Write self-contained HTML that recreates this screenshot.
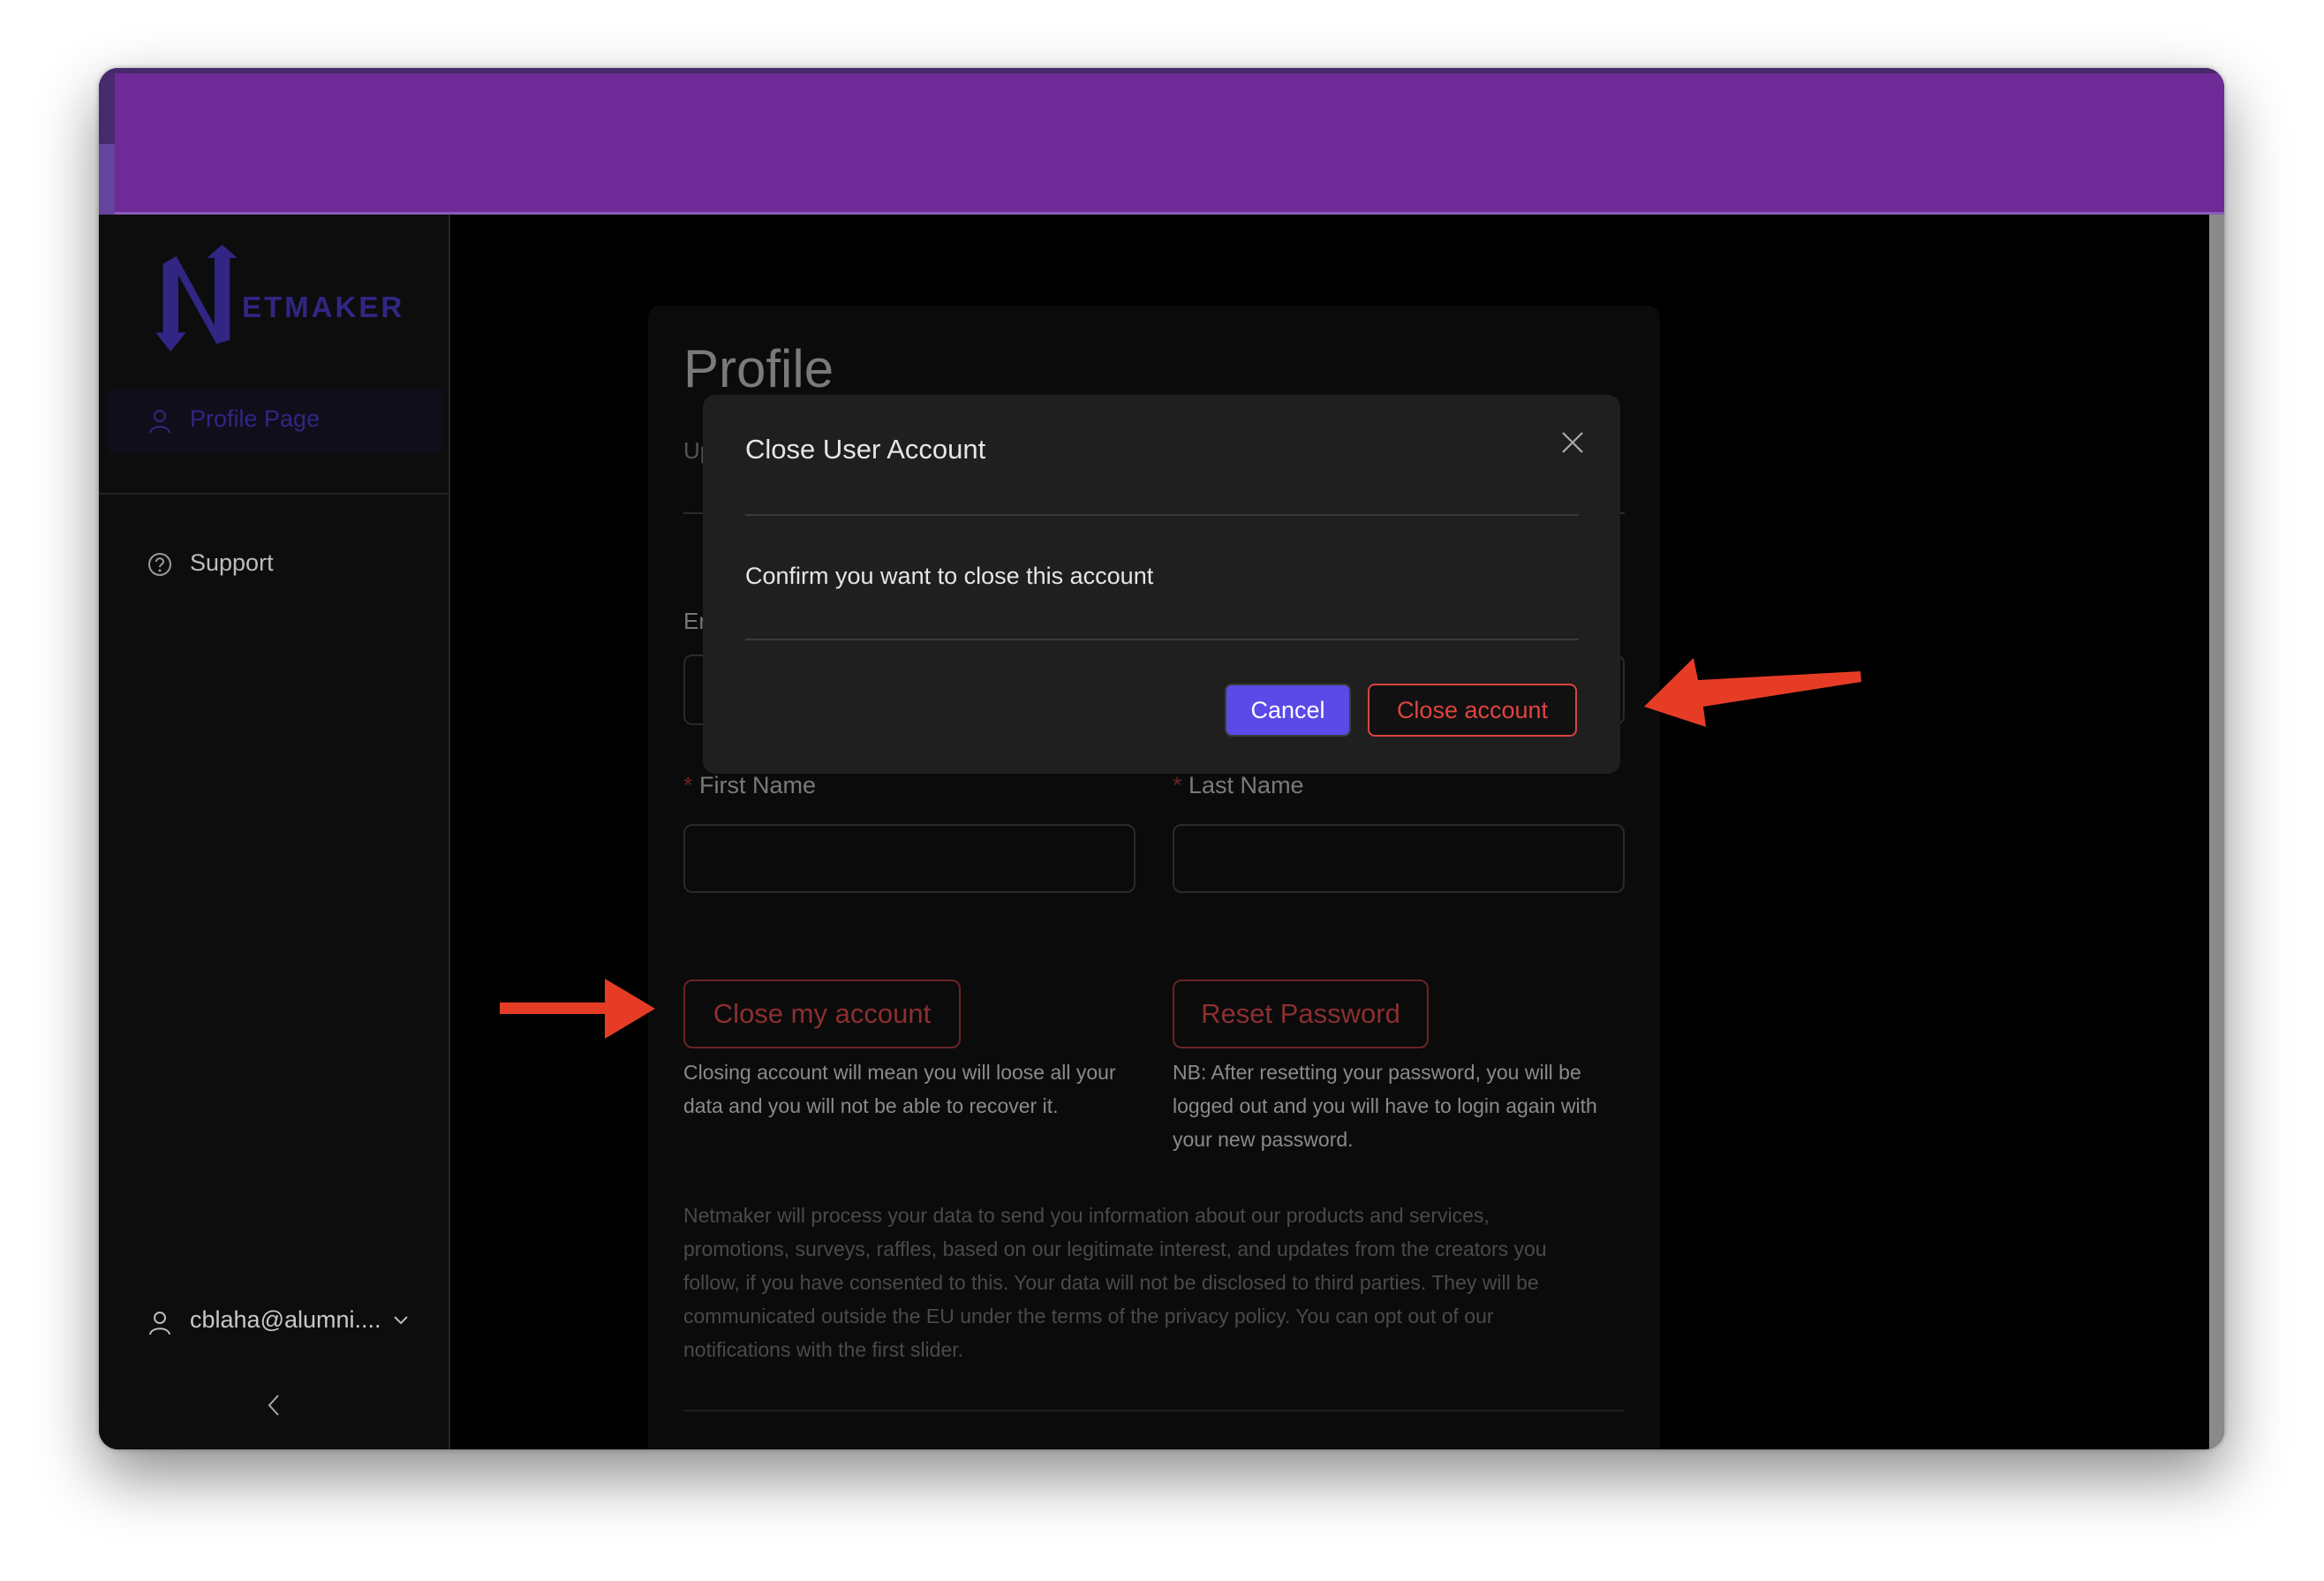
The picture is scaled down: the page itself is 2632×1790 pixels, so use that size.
<!DOCTYPE html>
<html><head><meta charset="utf-8"><style>
*{margin:0;padding:0;box-sizing:border-box}
body{width:2632px;height:1790px;background:#fff;position:relative;overflow:hidden;font-family:"Liberation Sans",sans-serif}
.win{position:absolute;left:112px;top:77px;width:2407px;height:1564px;border-radius:22px;overflow:hidden;background:#000;box-shadow:0 30px 70px rgba(0,0,0,.45),0 0 6px rgba(0,0,0,.3)}
.hdr{position:absolute;left:0;top:0;width:100%;height:166px;background:#6e2a96;border-top:6px solid #472a6b;border-bottom:3px solid #8a5bb8}
.hdr .l{position:absolute;left:0;top:0;width:18px;height:160px;background:#472a6b}
.hdr .l2{position:absolute;left:0;top:80px;width:18px;height:80px;background:#64449c}
.side{position:absolute;left:0;top:166px;width:398px;height:1398px;background:#0d0d0d;border-right:2px solid #262626}
.gray{position:absolute;right:0;top:166px;width:17px;height:1398px;background:#8a8a8a}
.card{position:absolute;left:622px;top:269px;width:1146px;height:1400px;background:#0b0b0b;border-radius:14px}
.abs{position:absolute;white-space:nowrap}
.inp{position:absolute;border:2px solid #2a2a2a;border-radius:10px;background:#0b0b0b}
.btnr{position:absolute;border:2px solid #6b2424;border-radius:10px;color:#8c2f2f;font-size:31px;display:flex;align-items:center;justify-content:center}
.desc{position:absolute;color:#8a8a8a;font-size:23px;line-height:38px}
.modal{position:absolute;left:684px;top:370px;width:1039px;height:429px;background:#1f1f1f;border-radius:14px}
</style></head><body>
<div class="win">
 <div class="hdr"><div class="l"></div><div class="l2"></div></div>
 <div class="side">
  <svg class="abs" style="left:64px;top:34px" width="290" height="125" viewBox="0 0 290 125">
   <g fill="#312683" transform="scale(1.08)">
    <path d="M8 20 L22 12 L62 85 L62 14 L54 14 L70 0 L86 14 L78 14 L78 100 L64 104 L24 32 L24 92 L32 92 L16 112 L0 92 L8 92 Z"/>
   </g>
   <text x="98" y="82" font-family="Liberation Sans,sans-serif" font-weight="bold" font-size="33" letter-spacing="3" fill="#312683">ETMAKER</text>
  </svg>
  <div class="abs" style="left:9px;top:197px;width:380px;height:74px;background:#0f0e1a;border-radius:8px"></div>
  <svg class="abs" style="left:56px;top:220px" width="26" height="28" viewBox="0 0 26 28"><circle cx="13" cy="8" r="6" fill="none" stroke="#312683" stroke-width="2"/><path d="M2 27 C3 18 23 18 24 27" fill="none" stroke="#312683" stroke-width="2"/></svg>
  <div class="abs" style="left:103px;top:216px;font-size:27px;color:#312683">Profile Page</div>
  <div class="abs" style="left:0;top:315px;width:398px;height:2px;background:#222"></div>
  <svg class="abs" style="left:55px;top:382px" width="28" height="28" viewBox="0 0 28 28"><circle cx="14" cy="14" r="12" fill="none" stroke="#9a9a9a" stroke-width="2"/><path d="M10 11 C10 6 18 6 18 11 C18 14 14 14 14 17" fill="none" stroke="#9a9a9a" stroke-width="2"/><circle cx="14" cy="21" r="1.5" fill="#9a9a9a"/></svg>
  <div class="abs" style="left:103px;top:379px;font-size:27px;color:#bdbdbd">Support</div>
  <svg class="abs" style="left:56px;top:1241px" width="26" height="28" viewBox="0 0 26 28"><circle cx="13" cy="8" r="6" fill="none" stroke="#bbb" stroke-width="2"/><path d="M2 27 C3 18 23 18 24 27" fill="none" stroke="#bbb" stroke-width="2"/></svg>
  <div class="abs" style="left:103px;top:1236px;font-size:27px;color:#c8c8c8">cblaha@alumni....</div>
  <svg class="abs" style="left:333px;top:1246px" width="18" height="12" viewBox="0 0 18 12"><path d="M2 2 L9 9 L16 2" fill="none" stroke="#bbb" stroke-width="2"/></svg>
  <svg class="abs" style="left:190px;top:1335px" width="16" height="26" viewBox="0 0 16 26"><path d="M13 2 L3 13 L13 24" fill="none" stroke="#aaa" stroke-width="2"/></svg>
 </div>
 <div class="gray"></div>
 <div class="card">
  <div class="abs" style="left:40px;top:37px;font-size:60px;color:#7a7a7a">Profile</div>
  <div class="abs" style="left:40px;top:149px;font-size:26px;color:#555">Up</div>
  <div class="abs" style="left:40px;top:234px;width:1066px;height:2px;background:#2a2a2a"></div>
  <div class="abs" style="left:40px;top:342px;font-size:26px;color:#777">Er</div>
  <div class="inp" style="left:40px;top:395px;width:1066px;height:80px"></div>
  <div class="abs" style="left:40px;top:528px;font-size:27px;color:#7a7a7a"><span style="color:#6b2424">* </span>First Name</div>
  <div class="abs" style="left:594px;top:528px;font-size:27px;color:#7a7a7a"><span style="color:#6b2424">* </span>Last Name</div>
  <div class="inp" style="left:40px;top:587px;width:512px;height:78px"></div>
  <div class="inp" style="left:594px;top:587px;width:512px;height:78px"></div>
  <div class="btnr" style="left:40px;top:763px;width:314px;height:78px">Close my account</div>
  <div class="btnr" style="left:594px;top:763px;width:290px;height:78px">Reset Password</div>
  <div class="desc" style="left:40px;top:849px;width:520px">Closing account will mean you will loose all your data and you will not be able to recover it.</div>
  <div class="desc" style="left:594px;top:849px;width:520px">NB: After resetting your password, you will be logged out and you will have to login again with your new password.</div>
  <div class="desc" style="left:40px;top:1011px;width:1030px;color:#4a4a4a">Netmaker will process your data to send you information about our products and services, promotions, surveys, raffles, based on our legitimate interest, and updates from the creators you follow, if you have consented to this. Your data will not be disclosed to third parties. They will be communicated outside the EU under the terms of the privacy policy. You can opt out of our notifications with the first slider.</div>
  <div class="abs" style="left:40px;top:1250px;width:1066px;height:2px;background:#1f1f1f"></div>
 </div>
 <div class="modal">
  <div class="abs" style="left:48px;top:44px;font-size:31px;color:#e6e6e6">Close User Account</div>
  <svg class="abs" style="left:971px;top:40px" width="28" height="28" viewBox="0 0 28 28"><path d="M3 3 L25 25 M25 3 L3 25" stroke="#aaa" stroke-width="2.2"/></svg>
  <div class="abs" style="left:48px;top:135px;width:944px;height:2px;background:#3a3a3a"></div>
  <div class="abs" style="left:48px;top:190px;font-size:27px;color:#e6e6e6">Confirm you want to close this account</div>
  <div class="abs" style="left:48px;top:276px;width:944px;height:2px;background:#3a3a3a"></div>
 </div>
 <div class="abs" style="left:1275px;top:697px;width:143px;height:60px;background:#5b4ae8;border:2px solid #3c3c3c;border-radius:8px;color:#fff;font-size:27px;display:flex;align-items:center;justify-content:center">Cancel</div>
 <div class="abs" style="left:1437px;top:697px;width:237px;height:60px;background:#111;border:2px solid #d9443f;border-radius:8px;color:#e0443f;font-size:27px;display:flex;align-items:center;justify-content:center">Close account</div>
</div>
<svg class="abs" style="left:0;top:0" width="2632" height="1790">
 <path d="M566 1135 L685 1135 L685 1108 L742 1142 L685 1176 L685 1148 L566 1148 Z" fill="#e63c26"/>
 <path d="M2107 760 L2108 772 L1929 800 L1932 823 L1862 800 L1918 745 L1923 770 Z" fill="#e63c26"/>
</svg>
</body></html>
